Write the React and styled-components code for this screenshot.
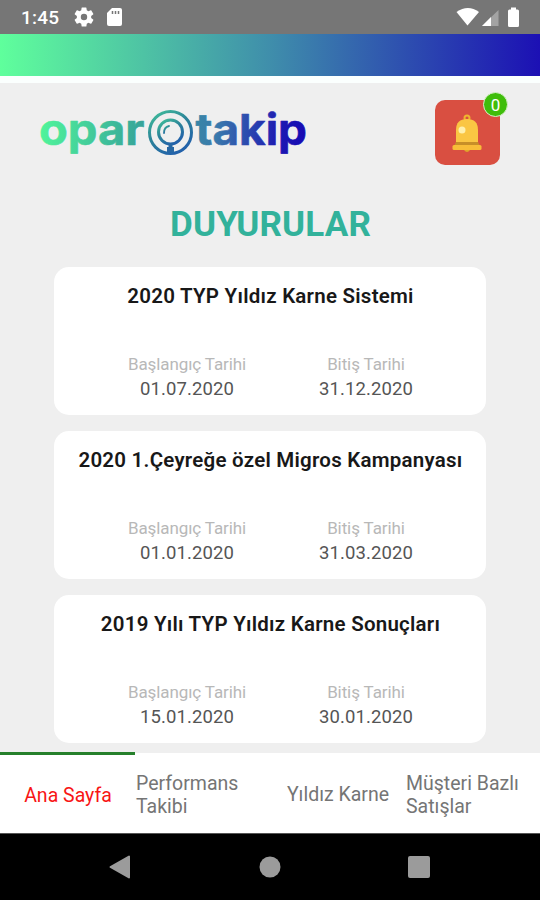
import React from "react"
import styled, { createGlobalStyle } from "styled-components";

const GlobalStyle = createGlobalStyle`
* {
box-sizing: border-box;
}
body {
margin: 0;
background: #efefef;
font-family: Roboto, "Liberation Sans", sans-serif;
}
h1, h2, p {
margin: 0;
}
`

const Screen = styled.div`
width: 540px;
height: 900px;
display: flex;
flex-direction: column;
overflow: hidden;
background: #efefef;
`

const StatusBar = styled.header`
height: 34px;
flex: none;
display: flex;
align-items: center;
justify-content: space-between;
padding: 0 19px 0 21px;
background: #767676;
`
const StatusLeft = styled.div`
display: flex;
align-items: center;
`
const Clock = styled.span`
width: 53px;
color: white;
font-size: 19px;
font-weight: 500;
line-height: 34px;
padding-top: 2px;
letter-spacing: 0.2px;
`

const GradientBar = styled.div`
height: 49px;
flex: none;
border-bottom: 7px solid #fbfffe;
background: linear-gradient(90deg, #5fff9c 0%, #3f8eab 50%, #1c10b4 100%);
`

const Content = styled.main`
flex: 1;
min-height: 0;
overflow: hidden;
display: flex;
flex-direction: column;
align-items: center;
`
const TopRow = styled.div`
width: 100%;
height: 97px;
flex: none;
display: flex;
justify-content: space-between;
padding: 17px 40px 0 35px;
`
const BellBox = styled.div`
position: relative;
width: 65px;
height: 65px;
border-radius: 10px;
background: #d94f41;
display: flex;
align-items: center;
justify-content: center;
`
const Badge = styled.span`
position: absolute;
top: -8px;
right: -8px;
width: 25px;
height: 25px;
border-radius: 50%;
background: #3fbd0b;
border: 1px solid #d9efcd;
color: white;
font-size: 17px;
line-height: 24px;
text-align: center;
`

const Title = styled.h1`
height: 87px;
flex: none;
padding: 24px 0 0 1px;
color: #32b29b;
font-size: 35px;
font-weight: 700;
line-height: 41px;
letter-spacing: 0.15px;
`

const CardList = styled.section`
display: flex;
flex-direction: column;
gap: 16.4px;
`
const Card = styled.article`
width: 432px;
height: 147.8px;
flex: none;
padding-top: 17px;
border-radius: 15px;
background: white;
`
const CardTitle = styled.h2`
height: 70px;
padding-left: 1px;
color: #181818;
font-size: 20.5px;
font-weight: 600;
line-height: 24px;
letter-spacing: 0.24px;
text-align: center;
white-space: nowrap;
`
const Dates = styled.div`
display: grid;
grid-template-columns: 179px 179px;
justify-content: center;
padding-left: 13px;
text-align: center;
`
const Label = styled.p`
color: #b8b8b8;
font-size: 17px;
line-height: 20px;
letter-spacing: -0.1px;
`
const DateText = styled.p`
color: #555555;
font-size: 18.5px;
line-height: 24px;
padding-top: 3px;
letter-spacing: 0.1px;
`

const TabBar = styled.nav`
height: 80px;
flex: none;
display: grid;
grid-template-columns: repeat(4, 135px);
background: white;
`
const Tab = styled.div`
display: flex;
align-items: center;
justify-content: ${props => props.$wrap ? "flex-start" : "center"};
padding-top: ${props => props.$wrap ? "3px" : "2px"};
padding-left: 1px;
border-top: ${props => props.$active ? "3px solid #26802b" : "none"};
margin-top: ${props => props.$active ? "-1px" : "0"};
color: ${props => props.$active ? "#f81515" : "#757575"};
font-size: 19.5px;
line-height: 23px;
white-space: pre;
`

const NavBar = styled.footer`
height: 67px;
flex: none;
display: flex;
align-items: center;
justify-content: space-between;
padding: 0 110px 0 109px;
background: black;
border-top: 1px solid #555555;
`

const announcements = [
    { title: "2020 TYP Yıldız Karne Sistemi", start: "01.07.2020", end: "31.12.2020" },
    { title: "2020 1.Çeyreğe özel Migros Kampanyası", start: "01.01.2020", end: "31.03.2020" },
    { title: "2019 Yılı TYP Yıldız Karne Sonuçları", start: "15.01.2020", end: "30.01.2020" },
]

const tabs = [
    { text: "Ana Sayfa", active: true },
    { text: "Performans\nTakibi", wrap: true },
    { text: "Yıldız Karne" },
    { text: "Müşteri Bazlı\nSatışlar", wrap: true },
]

function SettingsIcon(){
    return(
        <svg width="20" height="20" viewBox="2 2 20 20" fill="white">
            <path d="M19.14 12.94c.04-.3.06-.61.06-.94s-.02-.64-.07-.94l2.03-1.58a.5.5 0 0 0 .12-.61l-1.92-3.32a.49.49 0 0 0-.59-.22l-2.39.96a7 7 0 0 0-1.62-.94L14.4 2.81a.48.48 0 0 0-.48-.41h-3.84a.47.47 0 0 0-.47.41l-.36 2.54a7.3 7.3 0 0 0-1.62.94l-2.39-.96a.48.48 0 0 0-.59.22L2.74 8.87a.47.47 0 0 0 .12.61l2.03 1.58a6 6 0 0 0 0 1.88l-2.03 1.58a.5.5 0 0 0-.12.61l1.92 3.32c.12.22.37.29.59.22l2.39-.96c.5.38 1.03.7 1.62.94l.36 2.54c.05.24.24.41.48.41h3.84c.24 0 .44-.17.47-.41l.36-2.54a7.3 7.3 0 0 0 1.62-.94l2.39.96c.22.08.47 0 .59-.22l1.92-3.32a.47.47 0 0 0-.12-.61zM12 15.2a3.2 3.2 0 1 1 0-6.4 3.2 3.2 0 0 1 0 6.4z" />
        </svg>
    )
}

function SdCardIcon(){
    return(
        <svg width="32" height="20" viewBox="2 0 32 20">
            <path d="M20 1h8q2 0 2 2v14q0 2-2 2H17q-2 0-2-2V6z" fill="white" />
            <path d="M20.500 4v3M23.500 4v3M26.500 4v3" stroke="#767676" strokeWidth="1.500" />
        </svg>
    )
}

function SignalIcons(){
    return(
        <svg width="65" height="22" viewBox="0 0 65 22">
            <path d="M0.500 6Q12 -2 23 6L11.500 19.500z" fill="white" />
            <path d="M42.500 4v16H26z" fill="#a3a3a3" />
            <path d="M35 11v9H26z" fill="white" />
            <path d="M55 3.500V1.500h5v2h1.500q1.500 0 1.500 1.500v14.500q0 1.500-1.500 1.500h-8q-1.500 0-1.500-1.500V5q0-1.500 1.500-1.500z" fill="white" />
        </svg>
    )
}

function Logo(){
    return(
        <svg width="280" height="65" viewBox="35 100 280 65">
            <defs>
                <linearGradient id="brand" gradientUnits="userSpaceOnUse" x1="40" y1="120" x2="306" y2="145">
                    <stop offset="0" stopColor="#50f59b" />
                    <stop offset="0.4" stopColor="#35a099" />
                    <stop offset="0.66" stopColor="#3a7aac" />
                    <stop offset="0.9" stopColor="#1c18b2" />
                    <stop offset="1" stopColor="#1609b4" />
                </linearGradient>
                <linearGradient id="lens" x1="0" y1="0" x2="0.6" y2="1">
                    <stop offset="0" stopColor="#42c39a" />
                    <stop offset="0.5" stopColor="#2c8499" />
                    <stop offset="1" stopColor="#2362aa" />
                </linearGradient>
            </defs>
            <g fill="url(#brand)" stroke="url(#brand)" strokeWidth="0.6" strokeLinejoin="round" fontFamily="Inter, sans-serif" fontWeight="700" fontSize="43">
                <text x="39" y="145" textLength="105.500" lengthAdjust="spacingAndGlyphs">opar</text>
                <text x="195.500" y="145" textLength="111.500" lengthAdjust="spacingAndGlyphs">takip</text>
            </g>
            <g fill="none" stroke="url(#lens)">
                <circle cx="170.500" cy="132.500" r="21" strokeWidth="3" />
                <circle cx="170.500" cy="132" r="12" strokeWidth="3" />
                <path d="M164 133Q164 127 169 126" strokeWidth="1.800" strokeLinecap="round" />
            </g>
            <path d="M168.500 144h4v3h1.500v5h-7v-5h1.500z" fill="#2868a4" />
        </svg>
    )
}

function Bell(){
    return(
        <svg width="32" height="40" viewBox="1 0 32 40">
            <circle cx="16" cy="5" r="2.500" fill="none" stroke="#efb52e" strokeWidth="2" />
            <path d="M13 37q3 4 6 0z" fill="#e0a52a" />
            <path d="M5 30V17Q5 6 16 6t11 11v13z" fill="#fac643" />
            <path d="M5 29h22l2 4H3z" fill="#c78f28" />
            <rect x="1.500" y="32" width="29" height="5" rx="1.500" fill="#f8bd38" />
            <circle cx="11" cy="17" r="3.500" fill="#fff0ad" />
        </svg>
    )
}

export default function App(){
    return(
        <Screen>
            <GlobalStyle />
            <StatusBar>
                <StatusLeft>
                    <Clock>1:45</Clock>
                    <SettingsIcon />
                    <SdCardIcon />
                </StatusLeft>
                <SignalIcons />
            </StatusBar>
            <GradientBar />
            <Content>
                <TopRow>
                    <Logo />
                    <BellBox>
                        <Bell />
                        <Badge>0</Badge>
                    </BellBox>
                </TopRow>
                <Title>DUYURULAR</Title>
                <CardList>
                    {announcements.map(item => (
                        <Card key={item.title}>
                            <CardTitle>{item.title}</CardTitle>
                            <Dates>
                                <div>
                                    <Label>Başlangıç Tarihi</Label>
                                    <DateText>{item.start}</DateText>
                                </div>
                                <div>
                                    <Label>Bitiş Tarihi</Label>
                                    <DateText>{item.end}</DateText>
                                </div>
                            </Dates>
                        </Card>
                    ))}
                </CardList>
            </Content>
            <TabBar>
                {tabs.map(tab => (
                    <Tab key={tab.text} $active={tab.active} $wrap={tab.wrap}>{tab.text}</Tab>
                ))}
            </TabBar>
            <NavBar>
                <svg width="22" height="24" viewBox="0 0 22 24">
                    <path d="M20 1.500v21L1.500 12z" fill="#9b9b9b" stroke="#9b9b9b" strokeWidth="2" strokeLinejoin="round" />
                </svg>
                <svg width="22" height="22" viewBox="0 0 22 22">
                    <circle cx="11" cy="11" r="10.500" fill="#9b9b9b" />
                </svg>
                <svg width="22" height="22" viewBox="0 0 22 22">
                    <rect width="22" height="22" rx="2" fill="#9b9b9b" />
                </svg>
            </NavBar>
        </Screen>
    )
}
